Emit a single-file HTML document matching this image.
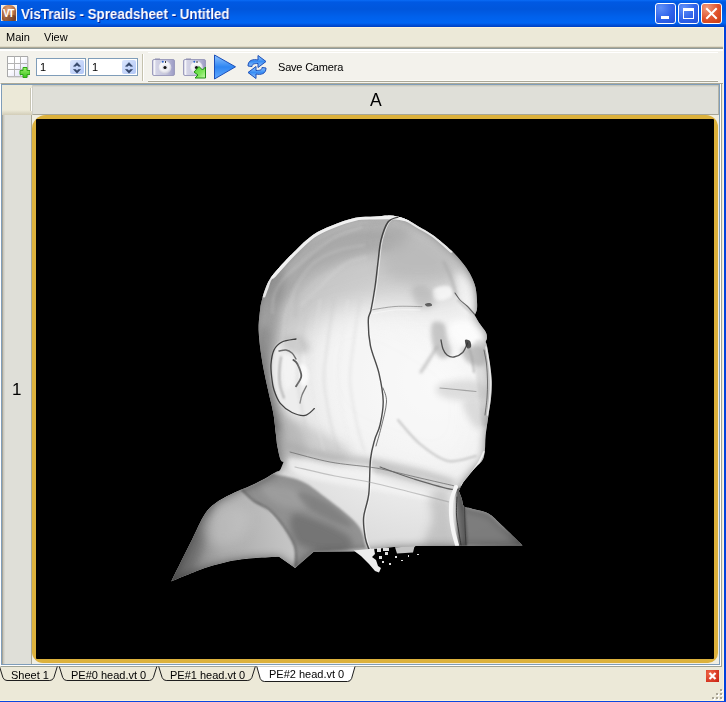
<!DOCTYPE html>
<html><head><meta charset="utf-8">
<style>
*{margin:0;padding:0;box-sizing:border-box}
html,body{width:726px;height:702px;overflow:hidden;background:#ece9d8;font-family:"Liberation Sans",sans-serif;}
.mi,.tab,#ttext,.spin span,.txt{will-change:transform}
.a{position:absolute}
#title{left:0;top:0;width:726px;height:27px;background:linear-gradient(#0a6cf7 0px,#0059e3 2px,#0056dc 9px,#0061ec 17px,#0065f3 23px,#0050d8 25px,#003fc0 27px)}
#ttext{left:21px;top:5.5px;color:#fff;font-weight:bold;font-size:14px;text-shadow:1px 1px 0 #0a1e8c;white-space:nowrap;transform:scaleX(0.955);transform-origin:0 0}
.tb{width:21px;height:21px;top:3px;border:1px solid #fff;border-radius:3px}
.mi{font-size:11px;top:31px;color:#000}
.spin{top:58px;width:50px;height:18px;border:1px solid #7f9db9;background:#fff}
.spin span{position:absolute;left:3px;top:2px;font-size:11px}
.spinb{position:absolute;left:33px;top:1px;width:14px;height:14px;border-radius:2px;background:linear-gradient(135deg,#dbe6fd,#b1c6f6)}
.hdr{background:#e0dfd8}
.tab{font-size:11px;top:669px;color:#000;white-space:nowrap}
</style></head><body>
<div id="title" class="a"></div>
<!-- app icon -->
<div class="a" style="left:1px;top:5px;width:16px;height:16px;background:#f2ede6"></div>
<div class="a" style="left:2px;top:5px;width:14px;height:16px;border-radius:6px 6px 2px 2px;background:radial-gradient(ellipse at 45% 30%,#e0a880 0,#c07a50 45%,#8e5030 80%,#6a3820 100%)"></div>
<div class="a" style="left:5px;top:15px;width:11px;height:6px;background:linear-gradient(90deg,#9a6040,#6a3a22);border-radius:3px 3px 0 0;opacity:.8"></div>
<div class="a" style="left:3px;top:9px;font-size:10px;font-weight:bold;color:#fff;letter-spacing:-1.5px;line-height:10px">VT</div>
<div id="ttext" class="a">VisTrails - Spreadsheet - Untitled</div>
<!-- title buttons -->
<div class="a tb" style="left:655px;background:radial-gradient(circle at 25% 20%,#5f8ff8,#2f63ea 55%,#2350d8)"></div>
<div class="a" style="left:661px;top:16px;width:8px;height:3px;background:#fff"></div>
<div class="a tb" style="left:678px;background:radial-gradient(circle at 25% 20%,#5f8ff8,#2f63ea 55%,#2350d8)"></div>
<div class="a" style="left:683px;top:8px;width:11px;height:11px;border:1px solid #fff;border-top-width:3px"></div>
<div class="a tb" style="left:701px;background:radial-gradient(circle at 25% 20%,#f09a7c,#e0512b 55%,#c83d12)"></div>
<svg class="a" style="left:701px;top:3px" width="21" height="21"><path d="M6 6L15 15M15 6L6 15" stroke="#fff" stroke-width="2" stroke-linecap="square"/></svg>

<!-- menu -->
<div class="a" style="left:0;top:27px;width:723px;height:1px;background:#fbf3dc"></div>
<div class="a" style="left:0;top:46px;width:723px;height:1px;background:#ddd9c6"></div>
<div class="a" style="left:0;top:47px;width:723px;height:1px;background:#aca895"></div>
<div class="a" style="left:0;top:48px;width:723px;height:1px;background:#909b9b"></div>
<div class="a mi" style="left:6px">Main</div>
<div class="a mi" style="left:44px">View</div>

<!-- toolbar -->
<div class="a" style="left:0;top:49px;width:723px;height:2px;background:#fff"></div>
<div class="a" style="left:0;top:51px;width:723px;height:31px;background:#f3f2ec"></div>
<div class="a" style="left:148px;top:52px;width:570px;height:1px;background:#fff"></div>
<div class="a" style="left:148px;top:80px;width:570px;height:1px;background:#fbfbf7"></div>
<div class="a" style="left:148px;top:81px;width:570px;height:1px;background:#a9a797"></div>
<div class="a" style="left:0;top:82px;width:723px;height:1px;background:#f6f5ee"></div>
<div class="a" style="left:0;top:83px;width:723px;height:1px;background:#aca997"></div>
<div class="a" style="left:142px;top:54px;width:1px;height:27px;background:#c5c2ae"></div>
<div class="a" style="left:143px;top:54px;width:1px;height:27px;background:#fff"></div>

<!-- grid icon -->
<svg class="a" style="left:6px;top:55px" width="24" height="24">
 <defs><linearGradient id="gg" x1="0" y1="0" x2="1" y2="1"><stop offset="0.4" stop-color="#fff"/><stop offset="1" stop-color="#d8d8f8"/></linearGradient>
 <linearGradient id="gp" x1="0" y1="0" x2="0" y2="1"><stop offset="0" stop-color="#9df46a"/><stop offset="1" stop-color="#3cc01e"/></linearGradient></defs>
 <rect x="1.5" y="1.5" width="20" height="20" fill="url(#gg)" stroke="#a9a9a9"/>
 <path d="M8.5 1.5V21.5M14.5 1.5V21.5M1.5 8.5H21.5M1.5 14.5H21.5" stroke="#b4b4b4"/>
 <path d="M22 2V22H2" stroke="#c8c8c8" fill="none"/>
 <path d="M15.5 14.5h3v-3h4v3h3v4h-3v3h-4v-3h-3z" transform="translate(-1.5,1)" fill="url(#gp)" stroke="#2ea615" stroke-width="1"/>
</svg>

<!-- spin boxes -->
<div class="a spin" style="left:36px"><span>1</span><div class="spinb"></div>
<svg style="position:absolute;left:36px;top:3px" width="8" height="12"><path d="M0.5 4.3L4 0.6L7.5 4.3L5.5 4.3L4 3.1L2.5 4.3z M0.5 7.5L4 11.2L7.5 7.5L5.5 7.5L4 8.7L2.5 7.5z" fill="#34466a" stroke="#34466a" stroke-width="0.6" stroke-linejoin="round"/></svg></div>
<div class="a spin" style="left:88px"><span>1</span><div class="spinb"></div>
<svg style="position:absolute;left:36px;top:3px" width="8" height="12"><path d="M0.5 4.3L4 0.6L7.5 4.3L5.5 4.3L4 3.1L2.5 4.3z M0.5 7.5L4 11.2L7.5 7.5L5.5 7.5L4 8.7L2.5 7.5z" fill="#34466a" stroke="#34466a" stroke-width="0.6" stroke-linejoin="round"/></svg></div>

<!-- camera icons -->
<svg class="a" style="left:151px;top:57px" width="26" height="20">
 <defs><linearGradient id="cb" x1="0" y1="0" x2="1" y2="0"><stop offset="0" stop-color="#b4b4d2"/><stop offset="0.08" stop-color="#fafafc"/><stop offset="0.16" stop-color="#d4d4e6"/><stop offset="0.6" stop-color="#c4c4dc"/><stop offset="1" stop-color="#9a9ac4"/></linearGradient>
 <radialGradient id="cl" cx="0.45" cy="0.4" r="0.6"><stop offset="0" stop-color="#fff"/><stop offset="0.6" stop-color="#f2f2f6"/><stop offset="1" stop-color="#c8c8d8"/></radialGradient></defs>
 <rect x="1.5" y="2.5" width="22" height="16" rx="1.5" fill="url(#cb)" stroke="#9d9dbd"/>
 <rect x="4" y="1.5" width="5" height="1.2" fill="#8d8db0"/>
 <circle cx="14" cy="10.5" r="6.4" fill="url(#cl)"/>
 <circle cx="14" cy="10.5" r="3" fill="#e6e6ee"/>
 <circle cx="14" cy="10.5" r="1.6" fill="#111"/>
 <circle cx="11.8" cy="4.8" r="1" fill="#2a62c8"/><rect x="14" y="4" width="1" height="2" fill="#333"/>
</svg>
<svg class="a" style="left:182px;top:57px" width="26" height="23">
 <defs><linearGradient id="ga" x1="0" y1="0" x2="1" y2="1"><stop offset="0" stop-color="#52d236"/><stop offset="0.6" stop-color="#7ee65a"/><stop offset="1" stop-color="#c8f8b0"/></linearGradient></defs>
 <rect x="1.5" y="2.5" width="22" height="16" rx="1.5" fill="url(#cb)" stroke="#9d9dbd"/>
 <rect x="4" y="1.5" width="5" height="1.2" fill="#8d8db0"/>
 <circle cx="14.5" cy="10.5" r="6.4" fill="url(#cl)"/>
 <circle cx="14.5" cy="10.5" r="3" fill="#e6e6ee"/>
 <circle cx="14.5" cy="10.5" r="1.6" fill="#111"/>
 <circle cx="12.3" cy="4.8" r="1" fill="#2a62c8"/><rect x="14.5" y="4" width="1" height="2" fill="#333"/>
 <path d="M12 15L17 9.5L20.5 13L23.5 10V21H13L16 18Z" fill="url(#ga)" stroke="#1f8f12" stroke-linejoin="round"/>
</svg>
<!-- play -->
<svg class="a" style="left:212px;top:53px" width="26" height="28">
 <defs><linearGradient id="pl" x1="0" y1="0" x2="0" y2="1"><stop offset="0" stop-color="#8fc4ff"/><stop offset="0.5" stop-color="#2f86f2"/><stop offset="1" stop-color="#62aaff"/></linearGradient></defs>
 <path d="M2.5 2L23.5 13.8L2.5 26z" fill="url(#pl)" stroke="#1c4fb8" stroke-linejoin="round"/>
</svg>
<!-- refresh -->
<svg class="a" style="left:245px;top:53px" width="24" height="28">
 <defs><linearGradient id="rf" x1="0" y1="0" x2="0" y2="1"><stop offset="0" stop-color="#9ccaff"/><stop offset="0.5" stop-color="#3a8ef4"/><stop offset="1" stop-color="#9ccaff"/></linearGradient></defs>
 <path d="M3 13C3 7 8 6 13 7V2.5L21 8.5L13 14.5V10.5C9 10.5 7 11 7 13.5z" fill="url(#rf)" stroke="#1c4fb8" stroke-linejoin="round"/>
 <path d="M21 15C21 21 16 22 11 21V25.5L3 19.5L11 13.5V17.5C15 17.5 17 17 17 14.5z" fill="url(#rf)" stroke="#1c4fb8" stroke-linejoin="round"/>
</svg>
<div class="a txt" style="left:278px;top:61px;font-size:11px;white-space:nowrap;letter-spacing:-0.2px">Save Camera</div>

<!-- spreadsheet frame -->
<div class="a" style="left:0px;top:83px;width:722px;height:584px;border-top:1px solid #aca997;border-left:1px solid #fff;border-right:1px solid #a0a496;border-bottom:1px solid #a0a496"></div>
<div class="a" style="left:1px;top:84px;width:720px;height:582px;border-right:1px solid #fff;border-bottom:1px solid #fff"></div>
<div class="a" style="left:1px;top:84px;width:719px;height:581px;border:1px solid #7f9db9;background:#ece9d8"></div>
<div class="a" style="left:2px;top:85px;width:30px;height:30px;background:linear-gradient(#ece9d8 0,#ece9d8 25px,#dcd8c4 28px,#d2cdb8 30px)"></div>
<div class="a" style="left:30px;top:88px;width:1px;height:23px;background:#c6c3b2"></div>
<div class="a" style="left:31px;top:88px;width:1px;height:23px;background:#fff"></div>
<div class="a hdr" style="left:32px;top:85px;width:687px;height:30px;border-bottom:1px solid #a7a697;border-left:1px solid #cfcfc7;border-right:1px solid #b5b4a6;background:linear-gradient(#c8c8bc 0,#c8c8bc 1px,#d6d6ce 1px,#d6d6ce 2px,#dfdfd8 2px)"></div>
<div class="a txt" style="left:370px;top:90px;font-size:17.5px">A</div>
<div class="a hdr" style="left:2px;top:115px;width:30px;height:549px;border-right:1px solid #a7a697;background:linear-gradient(90deg,#a9a597 0,#a9a597 1px,#c9c9c1 1px,#c9c9c1 2px,#d5d5cd 2px,#d5d5cd 3px,#dfdfd8 3px)"></div>
<div class="a txt" style="left:12px;top:380px;font-size:17px">1</div>
<!-- cell -->
<div class="a" style="left:32px;top:115px;width:687px;height:549px;background:#f0eee2"></div>
<div class="a" style="left:32px;top:115px;width:686px;height:548px;background:#dcb13c;border-radius:14px 12px 10px 11px"></div>
<div class="a" style="left:36px;top:119px;width:678px;height:540px;background:#000;border-radius:1px;overflow:hidden">
<!--HEAD--><svg width="678" height="540" viewBox="36 119 678 540" style="position:absolute;left:0;top:0">
<defs>
 <radialGradient id="hg" gradientUnits="userSpaceOnUse" cx="420" cy="380" r="240" fx="440" fy="380">
  <stop offset="0" stop-color="#f8f8f8"/><stop offset="0.4" stop-color="#efefef"/><stop offset="0.72" stop-color="#dcdcdc"/><stop offset="1" stop-color="#b2b2b2"/>
 </radialGradient>
 <linearGradient id="fg" gradientUnits="userSpaceOnUse" x1="175" y1="540" x2="300" y2="520">
  <stop offset="0" stop-color="#7c7c7c"/><stop offset="0.35" stop-color="#a8a8a8"/><stop offset="0.8" stop-color="#c0c0c0"/><stop offset="1" stop-color="#cacaca"/>
 </linearGradient>
 <clipPath id="cp"><path d="M260.5 306.0 C261.2 303.5 262.5 296.1 264.5 291.0 C266.5 285.9 267.5 282.0 272.4 275.6 C277.2 269.2 286.9 259.2 293.6 252.4 C300.3 245.6 306.4 239.5 312.8 235.0 C319.2 230.5 324.9 228.3 332.0 225.4 C339.1 222.5 348.1 219.2 355.3 217.7 C362.5 216.2 369.2 216.9 375.0 216.5 C380.8 216.1 385.1 215.2 390.0 215.5 C394.9 215.8 399.4 216.7 404.2 218.5 C408.9 220.3 413.8 223.7 418.5 226.4 C423.2 229.2 427.2 231.0 432.7 235.0 C438.2 239.0 446.1 245.6 451.3 250.6 C456.5 255.6 460.7 260.5 464.0 264.8 C467.3 269.1 469.3 272.4 471.2 276.2 C473.1 280.0 474.5 283.3 475.5 287.6 C476.5 291.9 476.8 298.2 477.0 301.9 C477.2 305.6 477.2 307.8 476.8 310.0 C476.4 312.2 475.1 314.3 474.7 315.2 C475.6 316.6 477.9 320.9 479.8 323.8 C481.7 326.7 484.6 329.9 485.8 332.3 C487.0 334.7 486.9 336.4 486.9 338.0 C486.8 339.6 485.7 341.3 485.5 342.0 C485.8 342.7 486.2 342.3 487.0 346.0 C487.8 349.7 489.2 358.1 490.0 364.0 C490.8 369.9 491.6 375.6 491.8 381.3 C492.0 387.0 491.6 392.7 491.0 398.4 C490.4 404.1 489.3 409.3 488.4 415.5 C487.5 421.7 486.2 429.9 485.6 435.6 C485.0 441.4 485.4 446.0 484.9 450.0 C484.4 454.0 484.2 457.0 482.7 459.8 C481.2 462.6 478.4 464.4 476.0 467.0 C473.6 469.6 470.7 473.0 468.5 475.7 C466.3 478.4 464.4 480.5 462.8 483.1 C461.2 485.7 459.5 489.8 458.8 491.1 C459.3 492.3 460.8 495.9 461.7 498.5 C462.6 501.1 462.4 504.9 464.0 506.5 C465.6 508.1 467.2 507.2 471.3 508.4 C475.4 509.6 483.3 510.6 488.4 513.5 C493.5 516.4 496.3 520.2 502.0 525.5 C507.7 530.8 519.2 542.2 522.6 545.5 L415.3 545.9 L415.0 547.0 L394.0 547.0 L353.0 551.6 L313.7 551.7 L295.1 567.9 L279.0 556.7 C272.8 557.1 253.4 557.6 241.8 559.2 C230.2 560.9 221.4 562.9 209.6 566.6 C197.8 570.3 177.6 579.0 171.2 581.5 C172.6 578.6 176.3 571.0 179.8 564.0 C183.3 557.0 188.1 547.5 192.2 539.3 C196.3 531.0 200.5 520.7 204.6 514.5 C208.7 508.3 211.6 505.8 217.0 502.0 C222.4 498.2 231.2 494.2 236.8 491.5 C242.4 488.8 245.9 487.9 250.5 485.8 C255.1 483.7 260.0 481.3 264.2 479.0 C268.4 476.7 273.0 473.7 275.6 472.2 C278.2 470.7 278.8 471.6 280.1 469.9 C281.4 468.2 283.0 463.2 283.6 461.9 C283.1 461.5 281.6 462.3 280.6 459.8 C279.6 457.3 278.3 451.1 277.5 447.0 C276.7 442.9 276.7 440.7 276.0 435.0 C275.3 429.3 274.6 420.2 273.3 413.0 C272.1 405.8 270.4 400.8 268.5 392.0 C266.6 383.2 263.6 370.3 262.0 360.0 C260.4 349.7 258.9 339.0 258.6 330.0 C258.4 321.0 260.2 310.0 260.5 306.0 Z"/></clipPath>
 <filter id="inner" x="-10%" y="-10%" width="120%" height="120%">
  <feFlood flood-color="#000"/><feComposite in2="SourceAlpha" operator="out"/><feGaussianBlur stdDeviation="5"/><feComposite in2="SourceAlpha" operator="in"/>
 </filter>
 <filter id="b06" x="-50%" y="-50%" width="200%" height="200%"><feGaussianBlur stdDeviation="0.6"/></filter><filter id="b08" x="-50%" y="-50%" width="200%" height="200%"><feGaussianBlur stdDeviation="0.8"/></filter><filter id="b1" x="-50%" y="-50%" width="200%" height="200%"><feGaussianBlur stdDeviation="1"/></filter><filter id="b15" x="-50%" y="-50%" width="200%" height="200%"><feGaussianBlur stdDeviation="1.5"/></filter><filter id="b2" x="-50%" y="-50%" width="200%" height="200%"><feGaussianBlur stdDeviation="2"/></filter><filter id="b25" x="-50%" y="-50%" width="200%" height="200%"><feGaussianBlur stdDeviation="2.5"/></filter><filter id="b3" x="-50%" y="-50%" width="200%" height="200%"><feGaussianBlur stdDeviation="3"/></filter><filter id="b4" x="-50%" y="-50%" width="200%" height="200%"><feGaussianBlur stdDeviation="4"/></filter><filter id="b5" x="-50%" y="-50%" width="200%" height="200%"><feGaussianBlur stdDeviation="5"/></filter><filter id="b6" x="-50%" y="-50%" width="200%" height="200%"><feGaussianBlur stdDeviation="6"/></filter><filter id="b7" x="-50%" y="-50%" width="200%" height="200%"><feGaussianBlur stdDeviation="7"/></filter><filter id="b8" x="-50%" y="-50%" width="200%" height="200%"><feGaussianBlur stdDeviation="8"/></filter><filter id="b10" x="-50%" y="-50%" width="200%" height="200%"><feGaussianBlur stdDeviation="10"/></filter><filter id="b12" x="-50%" y="-50%" width="200%" height="200%"><feGaussianBlur stdDeviation="12"/></filter><filter id="b14" x="-50%" y="-50%" width="200%" height="200%"><feGaussianBlur stdDeviation="14"/></filter><filter id="b16" x="-50%" y="-50%" width="200%" height="200%"><feGaussianBlur stdDeviation="16"/></filter>
</defs>
<path d="M260.5 306.0 C261.2 303.5 262.5 296.1 264.5 291.0 C266.5 285.9 267.5 282.0 272.4 275.6 C277.2 269.2 286.9 259.2 293.6 252.4 C300.3 245.6 306.4 239.5 312.8 235.0 C319.2 230.5 324.9 228.3 332.0 225.4 C339.1 222.5 348.1 219.2 355.3 217.7 C362.5 216.2 369.2 216.9 375.0 216.5 C380.8 216.1 385.1 215.2 390.0 215.5 C394.9 215.8 399.4 216.7 404.2 218.5 C408.9 220.3 413.8 223.7 418.5 226.4 C423.2 229.2 427.2 231.0 432.7 235.0 C438.2 239.0 446.1 245.6 451.3 250.6 C456.5 255.6 460.7 260.5 464.0 264.8 C467.3 269.1 469.3 272.4 471.2 276.2 C473.1 280.0 474.5 283.3 475.5 287.6 C476.5 291.9 476.8 298.2 477.0 301.9 C477.2 305.6 477.2 307.8 476.8 310.0 C476.4 312.2 475.1 314.3 474.7 315.2 C475.6 316.6 477.9 320.9 479.8 323.8 C481.7 326.7 484.6 329.9 485.8 332.3 C487.0 334.7 486.9 336.4 486.9 338.0 C486.8 339.6 485.7 341.3 485.5 342.0 C485.8 342.7 486.2 342.3 487.0 346.0 C487.8 349.7 489.2 358.1 490.0 364.0 C490.8 369.9 491.6 375.6 491.8 381.3 C492.0 387.0 491.6 392.7 491.0 398.4 C490.4 404.1 489.3 409.3 488.4 415.5 C487.5 421.7 486.2 429.9 485.6 435.6 C485.0 441.4 485.4 446.0 484.9 450.0 C484.4 454.0 484.2 457.0 482.7 459.8 C481.2 462.6 478.4 464.4 476.0 467.0 C473.6 469.6 470.7 473.0 468.5 475.7 C466.3 478.4 464.4 480.5 462.8 483.1 C461.2 485.7 459.5 489.8 458.8 491.1 C459.3 492.3 460.8 495.9 461.7 498.5 C462.6 501.1 462.4 504.9 464.0 506.5 C465.6 508.1 467.2 507.2 471.3 508.4 C475.4 509.6 483.3 510.6 488.4 513.5 C493.5 516.4 496.3 520.2 502.0 525.5 C507.7 530.8 519.2 542.2 522.6 545.5 L415.3 545.9 L415.0 547.0 L394.0 547.0 L353.0 551.6 L313.7 551.7 L295.1 567.9 L279.0 556.7 C272.8 557.1 253.4 557.6 241.8 559.2 C230.2 560.9 221.4 562.9 209.6 566.6 C197.8 570.3 177.6 579.0 171.2 581.5 C172.6 578.6 176.3 571.0 179.8 564.0 C183.3 557.0 188.1 547.5 192.2 539.3 C196.3 531.0 200.5 520.7 204.6 514.5 C208.7 508.3 211.6 505.8 217.0 502.0 C222.4 498.2 231.2 494.2 236.8 491.5 C242.4 488.8 245.9 487.9 250.5 485.8 C255.1 483.7 260.0 481.3 264.2 479.0 C268.4 476.7 273.0 473.7 275.6 472.2 C278.2 470.7 278.8 471.6 280.1 469.9 C281.4 468.2 283.0 463.2 283.6 461.9 C283.1 461.5 281.6 462.3 280.6 459.8 C279.6 457.3 278.3 451.1 277.5 447.0 C276.7 442.9 276.7 440.7 276.0 435.0 C275.3 429.3 274.6 420.2 273.3 413.0 C272.1 405.8 270.4 400.8 268.5 392.0 C266.6 383.2 263.6 370.3 262.0 360.0 C260.4 349.7 258.9 339.0 258.6 330.0 C258.4 321.0 260.2 310.0 260.5 306.0 Z" fill="url(#hg)"/>
<g clip-path="url(#cp)">
<path d="M171.2 581.5 C172.6 578.6 176.3 571.0 179.8 564.0 C183.3 557.0 188.1 547.5 192.2 539.3 C196.3 531.0 200.5 520.7 204.6 514.5 C208.7 508.3 211.6 505.8 217.0 502.0 C222.4 498.2 231.1 493.5 236.8 491.5 C242.5 489.5 248.6 490.2 251.0 490.0 C252.8 492.5 257.2 499.0 262.0 505.0 C266.8 511.0 274.7 519.0 280.0 526.0 C285.3 533.0 291.2 540.3 294.0 547.0 C296.8 553.7 296.5 562.8 297.0 566.0 L295.1 567.9 L279.0 556.7 C272.8 557.1 253.4 557.6 241.8 559.2 C230.2 560.9 221.4 562.9 209.6 566.6 C197.8 570.3 177.6 579.0 171.2 581.5 Z" fill="url(#fg)"/>
<path d="M262.0 300.0 C264.5 283.3 277.0 263.0 290.0 250.0 C303.0 237.0 321.7 228.0 340.0 222.0 C358.3 216.0 381.7 211.0 400.0 214.0 C418.3 217.0 438.3 229.0 450.0 240.0 C461.7 251.0 471.7 270.0 470.0 280.0 C468.3 290.0 455.0 296.7 440.0 300.0 C425.0 303.3 400.0 296.7 380.0 300.0 C360.0 303.3 337.5 311.7 320.0 320.0 C302.5 328.3 284.7 353.3 275.0 350.0 C265.3 346.7 259.5 316.7 262.0 300.0Z" fill="#a4a4a4" opacity="0.45" filter="url(#b14)"/>
<path d="M272.0 282.0 C275.0 273.2 287.5 260.7 298.0 252.0 C308.5 243.3 321.3 235.0 335.0 230.0 C348.7 225.0 367.5 222.0 380.0 222.0 C392.5 222.0 407.5 225.7 410.0 230.0 C412.5 234.3 405.0 243.3 395.0 248.0 C385.0 252.7 364.2 253.3 350.0 258.0 C335.8 262.7 321.7 268.2 310.0 276.0 C298.3 283.8 286.3 304.0 280.0 305.0 C273.7 306.0 269.0 290.8 272.0 282.0Z" fill="#8e8e8e" opacity="0.5" filter="url(#b6)"/>
<path d="M262.0 300.0 C264.0 286.3 268.3 283.0 272.0 278.0 C275.7 273.0 282.3 266.3 284.0 270.0 C285.7 273.7 283.0 288.3 282.0 300.0 C281.0 311.7 278.3 325.0 278.0 340.0 C277.7 355.0 278.7 373.3 280.0 390.0 C281.3 406.7 286.0 428.7 286.0 440.0 C286.0 451.3 283.0 463.0 280.0 458.0 C277.0 453.0 271.3 426.3 268.0 410.0 C264.7 393.7 261.0 378.3 260.0 360.0 C259.0 341.7 260.0 313.7 262.0 300.0Z" fill="#7c7c7c" opacity="0.55" filter="url(#b4)"/>
<path d="M385.0 228.0 C390.8 221.3 408.8 228.0 420.0 232.0 C431.2 236.0 446.2 244.8 452.0 252.0 C457.8 259.2 460.3 270.0 455.0 275.0 C449.7 280.0 431.7 282.5 420.0 282.0 C408.3 281.5 390.8 281.0 385.0 272.0 C379.2 263.0 379.2 234.7 385.0 228.0Z" fill="#b0b0b0" opacity="0.55" filter="url(#b7)"/>
<path d="M320.0 320.0 C330.0 308.3 353.3 308.3 370.0 310.0 C386.7 311.7 403.3 320.0 420.0 330.0 C436.7 340.0 460.8 351.7 470.0 370.0 C479.2 388.3 480.0 423.3 475.0 440.0 C470.0 456.7 455.8 467.5 440.0 470.0 C424.2 472.5 398.3 461.7 380.0 455.0 C361.7 448.3 341.7 442.5 330.0 430.0 C318.3 417.5 311.7 398.3 310.0 380.0 C308.3 361.7 310.0 331.7 320.0 320.0Z" fill="#fcfcfc" opacity="0.4" filter="url(#b12)"/>
<path d="M456.0 274.0 C457.3 270.3 466.5 277.7 470.0 282.0 C473.5 286.3 476.3 295.0 477.0 300.0 C477.7 305.0 476.5 311.3 474.0 312.0 C471.5 312.7 465.0 310.3 462.0 304.0 C459.0 297.7 454.7 277.7 456.0 274.0Z" fill="#fafafa" opacity="0.55" filter="url(#b3)"/>
<path d="M434.0 289.0 C436.3 286.8 444.8 285.2 448.0 286.0 C451.2 286.8 453.7 291.7 453.0 294.0 C452.3 296.3 447.2 299.2 444.0 300.0 C440.8 300.8 435.7 300.8 434.0 299.0 C432.3 297.2 431.7 291.2 434.0 289.0Z" fill="#fcfcfc" opacity="0.75" filter="url(#b15)"/>
<path d="M412.0 288.0 C413.3 284.7 422.3 284.7 426.0 286.0 C429.7 287.3 433.0 292.7 434.0 296.0 C435.0 299.3 434.7 304.3 432.0 306.0 C429.3 307.7 421.3 309.0 418.0 306.0 C414.7 303.0 410.7 291.3 412.0 288.0Z" fill="#a8a8a8" opacity="0.5" filter="url(#b3)"/>
<path d="M425.0 304.0 C425.5 303.4 428.8 302.8 430.0 303.0 C431.2 303.2 432.5 304.9 432.0 305.5 C431.5 306.1 428.2 306.8 427.0 306.5 C425.8 306.2 424.5 304.6 425.0 304.0Z" fill="#333" opacity="0.7" filter="url(#b06)"/>
<path d="M432.0 324.0 C433.8 320.3 441.3 321.3 444.0 324.0 C446.7 326.7 446.8 335.0 448.0 340.0 C449.2 345.0 452.2 351.0 451.0 354.0 C449.8 357.0 444.0 359.3 441.0 358.0 C438.0 356.7 434.5 351.7 433.0 346.0 C431.5 340.3 430.2 327.7 432.0 324.0Z" fill="#989898" opacity="0.5" filter="url(#b2)"/>
<path d="M452.0 322.0 C456.0 319.7 468.3 320.0 474.0 322.0 C479.7 324.0 485.0 330.0 486.0 334.0 C487.0 338.0 484.0 344.0 480.0 346.0 C476.0 348.0 467.0 347.7 462.0 346.0 C457.0 344.3 451.7 340.0 450.0 336.0 C448.3 332.0 448.0 324.3 452.0 322.0Z" fill="#fdfdfd" opacity="0.85" filter="url(#b3)"/>
<path d="M462.0 349.0 C464.0 346.3 476.0 344.8 480.0 346.0 C484.0 347.2 485.7 352.7 486.0 356.0 C486.3 359.3 485.0 365.0 482.0 366.0 C479.0 367.0 471.3 364.8 468.0 362.0 C464.7 359.2 460.0 351.7 462.0 349.0Z" fill="#9a9a9a" opacity="0.55" filter="url(#b2)"/>
<path d="M440.0 384.0 C445.3 381.7 462.0 379.3 470.0 380.0 C478.0 380.7 485.7 384.7 488.0 388.0 C490.3 391.3 489.3 398.0 484.0 400.0 C478.7 402.0 463.7 401.0 456.0 400.0 C448.3 399.0 440.7 396.7 438.0 394.0 C435.3 391.3 434.7 386.3 440.0 384.0Z" fill="#bdbdbd" opacity="0.45" filter="url(#b3)"/>
<path d="M270.0 412.0 C272.7 408.3 284.2 413.3 290.0 418.0 C295.8 422.7 303.3 432.7 305.0 440.0 C306.7 447.3 303.8 458.3 300.0 462.0 C296.2 465.7 286.3 465.7 282.0 462.0 C277.7 458.3 276.0 448.3 274.0 440.0 C272.0 431.7 267.3 415.7 270.0 412.0Z" fill="#a0a0a0" opacity="0.5" filter="url(#b4)"/>
<path d="M288.0 420.0 C294.0 418.7 309.7 426.7 320.0 432.0 C330.3 437.3 347.3 446.8 350.0 452.0 C352.7 457.2 344.3 462.0 336.0 463.0 C327.7 464.0 308.7 461.8 300.0 458.0 C291.3 454.2 286.0 446.3 284.0 440.0 C282.0 433.7 282.0 421.3 288.0 420.0Z" fill="#b0b0b0" opacity="0.45" filter="url(#b5)"/>
<path d="M378.0 466.0 C383.7 465.7 398.0 470.3 410.0 474.0 C422.0 477.7 441.3 485.8 450.0 488.0 C458.7 490.2 461.7 485.7 462.0 487.0 C462.3 488.3 460.7 495.8 452.0 496.0 C443.3 496.2 422.7 491.3 410.0 488.0 C397.3 484.7 381.3 479.7 376.0 476.0 C370.7 472.3 372.3 466.3 378.0 466.0Z" fill="#a8a8a8" opacity="0.5" filter="url(#b2)"/>
<path d="M290.0 458.0 C296.7 456.7 325.0 465.3 340.0 468.0 C355.0 470.7 366.7 471.3 380.0 474.0 C393.3 476.7 407.5 481.2 420.0 484.0 C432.5 486.8 449.7 487.7 455.0 491.0 C460.3 494.3 459.5 503.0 452.0 504.0 C444.5 505.0 425.3 499.7 410.0 497.0 C394.7 494.3 378.3 491.5 360.0 488.0 C341.7 484.5 311.7 481.0 300.0 476.0 C288.3 471.0 283.3 459.3 290.0 458.0Z" fill="#f4f4f4" opacity="0.7" filter="url(#b2)"/>
<path d="M241.8 489.8 C243.2 489.1 246.8 487.6 250.5 485.8 C254.2 484.0 260.6 481.1 264.2 479.0 C267.8 476.9 270.7 474.4 272.0 473.5 C276.8 474.8 292.2 477.1 301.0 481.0 C309.8 484.9 315.4 489.7 324.9 497.0 C334.4 504.3 350.9 516.5 357.8 525.0 C364.7 533.5 364.6 544.2 366.0 548.0 L313.7 552.0 L295.1 567.9 C295.1 564.4 296.9 553.6 295.0 546.8 C293.1 540.0 288.3 533.2 284.0 527.0 C279.7 520.8 274.0 513.9 269.0 509.6 C264.0 505.3 258.5 504.3 254.0 501.0 C249.5 497.7 243.8 491.7 241.8 489.8 Z" fill="#8a8a8a" opacity="0.9" filter="url(#b1)"/>
<path d="M292.0 515.0 C295.7 511.2 312.3 518.2 322.0 522.0 C331.7 525.8 346.2 533.3 350.0 538.0 C353.8 542.7 353.3 548.8 345.0 550.0 C336.7 551.2 308.8 550.8 300.0 545.0 C291.2 539.2 288.3 518.8 292.0 515.0Z" fill="#5e5e5e" opacity="0.55" filter="url(#b3)"/>
<path d="M262.0 486.0 C265.7 484.0 284.0 484.8 292.0 488.0 C300.0 491.2 310.3 501.7 310.0 505.0 C309.7 508.3 296.7 508.8 290.0 508.0 C283.3 507.2 274.7 503.7 270.0 500.0 C265.3 496.3 258.3 488.0 262.0 486.0Z" fill="#a8a8a8" opacity="0.5" filter="url(#b3)"/>
<path d="M300.0 492.0 C304.2 492.0 321.3 499.3 330.0 505.0 C338.7 510.7 352.0 523.5 352.0 526.0 C352.0 528.5 337.8 523.5 330.0 520.0 C322.2 516.5 310.0 509.7 305.0 505.0 C300.0 500.3 295.8 492.0 300.0 492.0Z" fill="#6e6e6e" opacity="0.45" filter="url(#b2)"/>
<path d="M459.3 491.3 C459.8 493.4 460.0 501.1 462.0 504.0 C464.0 506.9 466.9 506.8 471.3 508.4 C475.7 510.0 483.3 510.6 488.4 513.5 C493.5 516.4 496.3 520.2 502.0 525.5 C507.7 530.8 529.3 542.1 522.6 545.5 C515.9 548.9 472.1 545.9 462.0 546.0 Z" fill="#6c6c6c" opacity="0.85" filter="url(#b2)"/>
<path d="M456.0 492.0 C456.3 482.7 458.8 488.7 460.0 490.0 C461.2 491.3 462.0 495.0 463.0 500.0 C464.0 505.0 465.3 512.5 466.0 520.0 C466.7 527.5 468.3 540.7 467.0 545.0 C465.7 549.3 459.8 554.8 458.0 546.0 C456.2 537.2 455.7 501.3 456.0 492.0Z" fill="#505050" opacity="0.75" filter="url(#b1)"/>
<path d="M172.0 580.0 C171.3 575.5 180.7 559.0 186.0 548.0 C191.3 537.0 199.3 521.0 204.0 514.0 C208.7 507.0 214.0 500.8 214.0 506.0 C214.0 511.2 208.0 533.5 204.0 545.0 C200.0 556.5 195.3 569.2 190.0 575.0 C184.7 580.8 172.7 584.5 172.0 580.0Z" fill="#5a5a5a" opacity="0.55" filter="url(#b4)"/>
<path d="M200.0 520.0 C202.5 513.3 221.7 505.8 230.0 505.0 C238.3 504.2 248.3 509.2 250.0 515.0 C251.7 520.8 245.8 535.0 240.0 540.0 C234.2 545.0 221.7 548.3 215.0 545.0 C208.3 541.7 197.5 526.7 200.0 520.0Z" fill="#d0d0d0" opacity="0.4" filter="url(#b6)"/>
<path d="M294.8 339.2 C291.3 339.4 282.7 340.2 279.0 343.0 C275.3 345.8 273.8 351.0 272.5 356.0 C271.2 361.0 271.0 367.5 271.2 373.0 C271.4 378.5 272.3 383.9 273.8 389.0 C275.3 394.1 277.3 399.5 280.3 403.4 C283.3 407.3 287.9 410.6 292.0 412.5 C296.1 414.4 301.3 415.6 305.0 415.0 C308.7 414.4 313.2 411.9 314.4 408.6 C315.6 405.3 313.1 400.6 312.0 395.0 C310.9 389.4 309.2 381.7 308.0 375.0 C306.8 368.3 306.3 360.5 305.0 355.0 C303.7 349.5 301.7 344.6 300.0 342.0 C298.3 339.4 298.3 339.0 294.8 339.2Z" fill="#eeeeee" opacity="0.95" filter="url(#b1)"/>
<path d="M282.0 338.0 C284.5 335.7 295.3 334.3 300.0 336.0 C304.7 337.7 310.0 345.0 310.0 348.0 C310.0 351.0 304.2 353.7 300.0 354.0 C295.8 354.3 288.0 352.7 285.0 350.0 C282.0 347.3 279.5 340.3 282.0 338.0Z" fill="#a8a8a8" opacity="0.45" filter="url(#b3)"/>
<path d="M299.0 365.0 C300.2 362.7 304.3 363.8 306.0 366.0 C307.7 368.2 309.3 374.7 309.0 378.0 C308.7 381.3 305.7 385.7 304.0 386.0 C302.3 386.3 299.8 383.5 299.0 380.0 C298.2 376.5 297.8 367.3 299.0 365.0Z" fill="#fbfbfb" opacity="0.9" filter="url(#b15)"/>
<path d="M283.0 355.0 C284.7 352.3 289.8 354.2 292.0 356.0 C294.2 357.8 295.7 361.7 296.0 366.0 C296.3 370.3 295.7 378.0 294.0 382.0 C292.3 386.0 288.0 391.7 286.0 390.0 C284.0 388.3 282.5 377.8 282.0 372.0 C281.5 366.2 281.3 357.7 283.0 355.0Z" fill="#f4f4f4" opacity="0.8" filter="url(#b2)"/>
<path d="M262.0 330.0 C263.3 322.5 269.0 326.7 270.0 335.0 C271.0 343.3 267.3 367.5 268.0 380.0 C268.7 392.5 271.7 401.7 274.0 410.0 C276.3 418.3 283.0 427.5 282.0 430.0 C281.0 432.5 271.3 433.3 268.0 425.0 C264.7 416.7 263.0 395.8 262.0 380.0 C261.0 364.2 260.7 337.5 262.0 330.0Z" fill="#7a7a7a" opacity="0.45" filter="url(#b3)"/>
<path d="M465.0 340.0 C465.5 338.8 469.0 339.8 470.0 341.0 C471.0 342.2 471.5 345.8 471.0 347.0 C470.5 348.2 468.0 349.2 467.0 348.0 C466.0 346.8 464.5 341.2 465.0 340.0Z" fill="#222" opacity="0.8" filter="url(#b06)"/>
<path d="M474.0 344.0 C475.3 336.7 483.3 340.0 486.0 346.0 C488.7 352.0 489.5 367.7 490.0 380.0 C490.5 392.3 490.3 412.7 489.0 420.0 C487.7 427.3 483.8 429.0 482.0 424.0 C480.2 419.0 479.3 403.3 478.0 390.0 C476.7 376.7 472.7 351.3 474.0 344.0Z" fill="#b0b0b0" opacity="0.35" filter="url(#b15)"/>
<path d="M463.0 404.0 C463.7 399.7 476.2 399.3 480.0 402.0 C483.8 404.7 486.7 415.7 486.0 420.0 C485.3 424.3 479.8 430.7 476.0 428.0 C472.2 425.3 462.3 408.3 463.0 404.0Z" fill="#b4b4b4" opacity="0.4" filter="url(#b3)"/>
<path d="M430.0 495.0 C432.7 490.3 444.3 487.8 448.0 492.0 C451.7 496.2 450.8 511.0 452.0 520.0 C453.2 529.0 459.5 541.7 455.0 546.0 C450.5 550.3 428.8 550.3 425.0 546.0 C421.2 541.7 431.2 528.5 432.0 520.0 C432.8 511.5 427.3 499.7 430.0 495.0Z" fill="#a0a0a0" opacity="0.45" filter="url(#b4)"/>
<path d="M260.5 306.0 C261.2 303.5 262.5 296.1 264.5 291.0 C266.5 285.9 267.5 282.0 272.4 275.6 C277.2 269.2 286.9 259.2 293.6 252.4 C300.3 245.6 306.4 239.5 312.8 235.0 C319.2 230.5 324.9 228.3 332.0 225.4 C339.1 222.5 348.1 219.2 355.3 217.7 C362.5 216.2 369.2 216.9 375.0 216.5 C380.8 216.1 385.1 215.2 390.0 215.5 C394.9 215.8 399.4 216.7 404.2 218.5 C408.9 220.3 413.8 223.7 418.5 226.4 C423.2 229.2 427.2 231.0 432.7 235.0 C438.2 239.0 446.1 245.6 451.3 250.6 C456.5 255.6 460.7 260.5 464.0 264.8 C467.3 269.1 469.3 272.4 471.2 276.2 C473.1 280.0 474.5 283.3 475.5 287.6 C476.5 291.9 476.8 298.2 477.0 301.9 C477.2 305.6 477.2 307.8 476.8 310.0 C476.4 312.2 475.1 314.3 474.7 315.2 C475.6 316.6 477.9 320.9 479.8 323.8 C481.7 326.7 484.6 329.9 485.8 332.3 C487.0 334.7 486.9 336.4 486.9 338.0 C486.8 339.6 485.7 341.3 485.5 342.0 C485.8 342.7 486.2 342.3 487.0 346.0 C487.8 349.7 489.2 358.1 490.0 364.0 C490.8 369.9 491.6 375.6 491.8 381.3 C492.0 387.0 491.6 392.7 491.0 398.4 C490.4 404.1 489.3 409.3 488.4 415.5 C487.5 421.7 486.2 429.9 485.6 435.6 C485.0 441.4 485.4 446.0 484.9 450.0 C484.4 454.0 484.2 457.0 482.7 459.8 C481.2 462.6 478.4 464.4 476.0 467.0 C473.6 469.6 470.7 473.0 468.5 475.7 C466.3 478.4 464.4 480.5 462.8 483.1 C461.2 485.7 459.5 489.8 458.8 491.1 C459.3 492.3 460.8 495.9 461.7 498.5 C462.6 501.1 462.4 504.9 464.0 506.5 C465.6 508.1 467.2 507.2 471.3 508.4 C475.4 509.6 483.3 510.6 488.4 513.5 C493.5 516.4 496.3 520.2 502.0 525.5 C507.7 530.8 519.2 542.2 522.6 545.5 L415.3 545.9 L415.0 547.0 L394.0 547.0 L353.0 551.6 L313.7 551.7 L295.1 567.9 L279.0 556.7 C272.8 557.1 253.4 557.6 241.8 559.2 C230.2 560.9 221.4 562.9 209.6 566.6 C197.8 570.3 177.6 579.0 171.2 581.5 C172.6 578.6 176.3 571.0 179.8 564.0 C183.3 557.0 188.1 547.5 192.2 539.3 C196.3 531.0 200.5 520.7 204.6 514.5 C208.7 508.3 211.6 505.8 217.0 502.0 C222.4 498.2 231.2 494.2 236.8 491.5 C242.4 488.8 245.9 487.9 250.5 485.8 C255.1 483.7 260.0 481.3 264.2 479.0 C268.4 476.7 273.0 473.7 275.6 472.2 C278.2 470.7 278.8 471.6 280.1 469.9 C281.4 468.2 283.0 463.2 283.6 461.9 C283.1 461.5 281.6 462.3 280.6 459.8 C279.6 457.3 278.3 451.1 277.5 447.0 C276.7 442.9 276.7 440.7 276.0 435.0 C275.3 429.3 274.6 420.2 273.3 413.0 C272.1 405.8 270.4 400.8 268.5 392.0 C266.6 383.2 263.6 370.3 262.0 360.0 C260.4 349.7 258.9 339.0 258.6 330.0 C258.4 321.0 260.2 310.0 260.5 306.0 Z" fill="#000" filter="url(#inner)" opacity="0.45"/>

<path d="M444.0 262.0 C445.2 264.7 449.0 272.7 451.0 278.0 C453.0 283.3 455.2 291.3 456.0 294.0" fill="none" stroke="#a8a8a8" stroke-width="3.0" opacity="0.6" stroke-linecap="round" stroke-linejoin="round" filter="url(#b15)"/>
<path d="M470.0 268.0 C471.2 271.3 475.7 281.3 477.0 288.0 C478.3 294.7 477.8 304.7 478.0 308.0" fill="none" stroke="#9a9a9a" stroke-width="3.0" opacity="0.45" stroke-linecap="round" stroke-linejoin="round" filter="url(#b15)"/>
<path d="M437.0 347.0 C435.8 348.8 432.7 353.8 430.0 358.0 C427.3 362.2 422.5 369.7 421.0 372.0" fill="none" stroke="#a8a8a8" stroke-width="3.0" opacity="0.6" stroke-linecap="round" stroke-linejoin="round" filter="url(#b15)"/>
<path d="M398.0 420.0 C401.7 424.0 411.7 437.2 420.0 444.0 C428.3 450.8 438.7 459.0 448.0 461.0 C457.3 463.0 471.3 456.8 476.0 456.0" fill="none" stroke="#b8b8b8" stroke-width="2.2" opacity="0.7" stroke-linecap="round" stroke-linejoin="round" filter="url(#b1)"/>
<path d="M286.0 446.0 C293.3 447.8 316.0 454.3 330.0 457.0 C344.0 459.7 355.0 459.3 370.0 462.0 C385.0 464.7 406.3 469.5 420.0 473.0 C433.7 476.5 446.7 481.3 452.0 483.0" fill="none" stroke="#a4a4a4" stroke-width="7" opacity="0.6" stroke-linecap="round" stroke-linejoin="round" filter="url(#b3)"/>
<path d="M242.0 490.0 C244.0 491.8 249.5 497.7 254.0 501.0 C258.5 504.3 264.0 505.3 269.0 509.6 C274.0 513.9 279.7 520.8 284.0 527.0 C288.3 533.2 293.1 540.3 295.0 546.8 C296.9 553.3 295.4 562.8 295.5 566.0" fill="none" stroke="#444" stroke-width="2.0" opacity="0.6" stroke-linecap="round" stroke-linejoin="round" filter="url(#b1)"/>
<path d="M279.0 351.0 C280.2 350.8 283.8 349.7 286.0 350.0 C288.2 350.3 290.3 351.5 292.0 353.0 C293.7 354.5 295.3 358.0 296.0 359.0" fill="none" stroke="#505050" stroke-width="1.4" opacity="0.8" stroke-linecap="round" stroke-linejoin="round" filter="url(#b06)"/>
<path d="M281.0 357.0 C280.8 359.2 279.7 365.3 279.5 370.0 C279.3 374.7 279.2 380.3 280.0 385.0 C280.8 389.7 283.3 395.8 284.0 398.0" fill="none" stroke="#606060" stroke-width="1.3" opacity="0.6" stroke-linecap="round" stroke-linejoin="round" filter="url(#b08)"/>
<path d="M293.4 360.0 C294.1 360.7 296.1 361.3 297.4 364.0 C298.7 366.7 301.5 372.3 301.3 376.0 C301.1 379.7 296.9 384.6 296.0 386.3" fill="none" stroke="#333" stroke-width="1.8" opacity="0.8" stroke-linecap="round" stroke-linejoin="round" filter="url(#b06)"/>
<path d="M306.5 386.0 C305.8 387.5 303.1 392.2 302.0 395.0 C300.9 397.8 300.3 401.7 300.0 403.0" fill="none" stroke="#505050" stroke-width="1.3" opacity="0.75" stroke-linecap="round" stroke-linejoin="round" filter="url(#b06)"/>
<path d="M266.0 345.2 C266.6 339.8 268.3 321.4 269.4 312.9 C270.6 304.4 271.6 300.1 273.1 294.1 C274.5 288.2 274.9 283.0 278.2 277.1 C281.5 271.2 287.3 263.9 292.7 258.7 C298.1 253.5 303.5 250.3 310.6 246.2 C317.8 242.1 327.2 237.6 335.6 234.2 C344.0 230.8 352.0 227.8 361.1 225.7 C370.2 223.7 385.3 222.6 390.2 221.9" fill="none" stroke="#9a9a9a" stroke-width="2.5" opacity="0.25" stroke-linecap="round" stroke-linejoin="round" filter="url(#b15)"/>
<path d="M272.4 313.2 C272.7 310.1 272.7 300.2 274.4 294.6 C276.1 289.1 278.4 285.0 282.5 280.0 C286.6 275.0 293.6 269.4 298.9 264.7 C304.3 260.0 308.3 256.5 314.5 251.8 C320.8 247.0 328.7 240.4 336.5 236.3 C344.3 232.3 357.2 228.9 361.4 227.4" fill="none" stroke="#e0e0e0" stroke-width="2.5" opacity="0.25" stroke-linecap="round" stroke-linejoin="round" filter="url(#b15)"/>
<path d="M281.6 297.2 C283.1 295.2 286.9 290.0 290.6 285.4 C294.2 280.7 299.3 274.3 303.6 269.1 C307.8 263.8 310.3 258.7 316.0 253.8 C321.7 248.9 330.1 242.8 337.9 239.8 C345.7 236.8 353.8 236.1 362.6 235.7 C371.4 235.2 386.0 237.1 390.7 237.3" fill="none" stroke="#a0a0a0" stroke-width="3" opacity="0.22" stroke-linecap="round" stroke-linejoin="round" filter="url(#b15)"/>
<path d="M281.7 345.8 C282.3 340.6 283.6 322.3 285.2 314.7 C286.8 307.2 289.4 305.1 291.1 300.7 C292.8 296.4 293.0 293.5 295.5 288.6 C297.9 283.7 301.9 276.3 305.9 271.3 C309.9 266.3 313.5 262.5 319.5 258.8 C325.4 255.1 334.4 251.6 341.8 249.3 C349.2 247.0 360.2 245.9 363.9 245.2" fill="none" stroke="#dedede" stroke-width="3" opacity="0.22" stroke-linecap="round" stroke-linejoin="round" filter="url(#b15)"/>
<path d="M295.3 315.9 C295.5 313.7 295.7 306.7 296.4 302.6 C297.0 298.5 296.6 295.4 299.3 291.2 C301.9 286.9 307.7 281.0 312.1 277.2 C316.6 273.4 320.7 271.6 326.2 268.4 C331.7 265.2 338.9 261.0 345.4 258.0 C351.8 255.0 357.1 251.9 364.7 250.2 C372.3 248.4 386.6 247.9 391.0 247.5" fill="none" stroke="#a8a8a8" stroke-width="3" opacity="0.18" stroke-linecap="round" stroke-linejoin="round" filter="url(#b15)"/>
<path d="M302.4 304.8 C303.4 303.6 305.3 300.4 308.4 297.2 C311.6 294.1 317.5 289.5 321.3 285.9 C325.1 282.3 327.0 279.5 331.3 275.7 C335.7 271.9 341.7 266.1 347.4 263.0 C353.1 259.9 362.6 258.2 365.7 257.2" fill="none" stroke="#e4e4e4" stroke-width="4" opacity="0.18" stroke-linecap="round" stroke-linejoin="round" filter="url(#b15)"/>
<path d="M257.0 360.7 C257.7 365.7 259.6 381.6 261.1 390.8 C262.6 400.0 264.4 407.6 266.1 416.0 C267.8 424.4 269.4 433.9 271.1 441.1 C272.8 448.4 275.3 456.3 276.2 459.3" fill="none" stroke="#a0a0a0" stroke-width="2" opacity="0.25" stroke-linecap="round" stroke-linejoin="round" filter="url(#b1)"/>
<path d="M253.1 361.2 C253.8 366.2 255.6 382.2 257.1 391.5 C258.6 400.7 260.5 408.3 262.2 416.8 C263.9 425.2 265.5 434.8 267.2 442.0 C268.9 449.3 271.5 457.3 272.3 460.4" fill="none" stroke="#d8d8d8" stroke-width="2" opacity="0.25" stroke-linecap="round" stroke-linejoin="round" filter="url(#b1)"/>
<path d="M308.0 300.0 C307.0 306.7 303.7 326.7 302.0 340.0 C300.3 353.3 297.7 366.7 298.0 380.0 C298.3 393.3 301.7 408.3 304.0 420.0 C306.3 431.7 310.7 445.0 312.0 450.0" fill="none" stroke="#c8c8c8" stroke-width="2.5" opacity="0.35" stroke-linecap="round" stroke-linejoin="round" filter="url(#b15)"/>
<path d="M320.0 300.0 C319.0 306.7 315.7 326.7 314.0 340.0 C312.3 353.3 309.7 366.7 310.0 380.0 C310.3 393.3 313.7 408.3 316.0 420.0 C318.3 431.7 322.7 445.0 324.0 450.0" fill="none" stroke="#e8e8e8" stroke-width="2.5" opacity="0.3" stroke-linecap="round" stroke-linejoin="round" filter="url(#b15)"/>
<path d="M334.0 300.0 C333.0 306.7 329.7 326.7 328.0 340.0 C326.3 353.3 323.7 366.7 324.0 380.0 C324.3 393.3 327.7 408.3 330.0 420.0 C332.3 431.7 336.7 445.0 338.0 450.0" fill="none" stroke="#c4c4c4" stroke-width="2.5" opacity="0.3" stroke-linecap="round" stroke-linejoin="round" filter="url(#b15)"/>
<path d="M348.0 300.0 C347.0 306.7 343.7 326.7 342.0 340.0 C340.3 353.3 337.7 366.7 338.0 380.0 C338.3 393.3 341.7 408.3 344.0 420.0 C346.3 431.7 350.7 445.0 352.0 450.0" fill="none" stroke="#ececec" stroke-width="2.5" opacity="0.3" stroke-linecap="round" stroke-linejoin="round" filter="url(#b15)"/>
<path d="M360.0 300.0 C359.0 306.7 355.7 326.7 354.0 340.0 C352.3 353.3 349.7 366.7 350.0 380.0 C350.3 393.3 353.7 408.3 356.0 420.0 C358.3 431.7 362.7 445.0 364.0 450.0" fill="none" stroke="#c8c8c8" stroke-width="2.5" opacity="0.25" stroke-linecap="round" stroke-linejoin="round" filter="url(#b15)"/>
<path d="M264.0 296.0 C264.5 294.7 265.6 291.4 267.0 288.0 C268.4 284.6 268.0 281.5 272.4 275.6 C276.8 269.7 290.1 256.3 293.6 252.4" fill="none" stroke="#f0f0f0" stroke-width="3.0" opacity="0.9" stroke-linecap="round" stroke-linejoin="round"/>
<path d="M272.4 275.6 C275.9 271.7 286.9 259.2 293.6 252.4 C300.3 245.6 306.4 239.5 312.8 235.0 C319.2 230.5 324.9 228.3 332.0 225.4 C339.1 222.5 348.1 219.2 355.3 217.7 C362.5 216.2 368.4 216.7 375.0 216.5 C381.6 216.3 389.5 216.1 395.0 216.5 C400.5 216.9 405.8 218.3 408.0 218.7" fill="none" stroke="#f4f4f4" stroke-width="6.0" opacity="0.95" stroke-linecap="round" stroke-linejoin="round"/>
<path d="M390.0 215.5 C392.4 216.0 399.4 216.7 404.2 218.5 C408.9 220.3 413.8 223.7 418.5 226.4 C423.2 229.2 427.2 231.0 432.7 235.0 C438.2 239.0 448.2 248.0 451.3 250.6" fill="none" stroke="#f0f0f0" stroke-width="4.0" opacity="0.9" stroke-linecap="round" stroke-linejoin="round"/>
<path d="M399.5 217.0 C397.8 217.8 392.3 218.2 389.5 222.0 C386.7 225.8 384.2 233.3 382.5 240.0 C380.8 246.7 380.5 254.2 379.5 262.0 C378.5 269.8 377.7 279.0 376.5 287.0 C375.3 295.0 373.6 304.5 372.5 310.0 C371.4 315.5 369.9 314.1 369.8 320.0 C369.7 325.9 370.1 336.7 371.9 345.6 C373.7 354.5 378.4 364.1 380.5 373.4 C382.6 382.7 384.5 392.6 384.7 401.2 C384.9 409.8 382.9 418.6 381.5 425.0 C380.1 431.4 377.8 434.0 376.2 439.7 C374.6 445.4 373.0 450.2 372.0 459.2 C371.0 468.2 371.4 483.9 370.3 493.6 C369.2 503.4 365.7 510.2 365.1 517.7 C364.5 525.2 366.0 533.2 366.9 538.4 C367.8 543.6 369.7 547.0 370.3 548.7" fill="none" stroke="#fafafa" stroke-width="1.0" opacity="0.6" stroke-linecap="round" stroke-linejoin="round"/>
<path d="M398.0 217.0 C396.3 217.8 390.8 218.2 388.0 222.0 C385.2 225.8 382.7 233.3 381.0 240.0 C379.3 246.7 379.0 254.2 378.0 262.0 C377.0 269.8 376.2 279.0 375.0 287.0 C373.8 295.0 372.1 304.5 371.0 310.0 C369.9 315.5 368.4 314.1 368.3 320.0 C368.2 325.9 368.6 336.7 370.4 345.6 C372.2 354.5 376.9 364.1 379.0 373.4 C381.1 382.7 383.0 392.6 383.2 401.2 C383.4 409.8 381.4 418.6 380.0 425.0 C378.6 431.4 376.3 434.0 374.7 439.7 C373.1 445.4 371.5 450.2 370.5 459.2 C369.5 468.2 369.9 483.9 368.8 493.6 C367.7 503.4 364.2 510.2 363.6 517.7 C363.0 525.2 364.5 533.2 365.4 538.4 C366.3 543.6 368.2 547.0 368.8 548.7" fill="none" stroke="#2e2e2e" stroke-width="1.4" opacity="0.85" stroke-linecap="round" stroke-linejoin="round"/>
<path d="M383.0 388.0 C383.6 390.3 386.8 395.3 386.5 402.0 C386.2 408.7 382.8 420.7 381.0 428.0 C379.2 435.3 376.8 443.0 376.0 446.0" fill="none" stroke="#3a3a3a" stroke-width="1.0" opacity="0.7" stroke-linecap="round" stroke-linejoin="round"/>
<path d="M371.0 310.0 C375.0 309.4 386.5 307.1 395.0 306.5 C403.5 305.9 417.5 306.6 422.0 306.6" fill="none" stroke="#8c8c8c" stroke-width="1.0" opacity="0.75" stroke-linecap="round" stroke-linejoin="round"/>
<path d="M372.0 313.5 C375.8 312.9 387.0 310.6 395.0 310.0 C403.0 309.4 415.8 310.0 420.0 310.0" fill="none" stroke="#fafafa" stroke-width="1.2" opacity="0.6" stroke-linecap="round" stroke-linejoin="round"/>
<path d="M455.0 293.0 C455.8 294.2 458.0 297.8 460.0 300.0 C462.0 302.2 464.3 303.3 467.0 306.0 C469.7 308.7 474.5 314.3 476.0 316.0" fill="none" stroke="#3a3a3a" stroke-width="1.1" opacity="0.8" stroke-linecap="round" stroke-linejoin="round"/>
<path d="M458.0 300.0 C459.2 301.2 462.7 304.8 465.0 307.0 C467.3 309.2 470.8 312.0 472.0 313.0" fill="none" stroke="#9a9a9a" stroke-width="2.0" opacity="0.5" stroke-linecap="round" stroke-linejoin="round" filter="url(#b1)"/>
<path d="M441.0 340.0 C441.3 341.5 442.0 346.5 443.0 349.0 C444.0 351.5 445.2 353.7 447.0 355.0 C448.8 356.3 451.4 357.4 454.0 357.0 C456.6 356.6 460.4 354.8 462.7 352.5 C464.9 350.2 466.7 344.6 467.5 343.0" fill="none" stroke="#2e2e2e" stroke-width="1.3" opacity="0.8" stroke-linecap="round" stroke-linejoin="round"/>
<path d="M469.0 348.0 C469.5 349.7 471.2 354.0 472.0 358.0 C472.8 362.0 473.7 369.7 474.0 372.0" fill="none" stroke="#9a9a9a" stroke-width="2.2" opacity="0.55" stroke-linecap="round" stroke-linejoin="round" filter="url(#b1)"/>
<path d="M440.0 388.0 C442.7 388.2 450.0 388.9 456.0 389.5 C462.0 390.1 472.7 391.2 476.0 391.5" fill="none" stroke="#8a8a8a" stroke-width="1.1" opacity="0.7" stroke-linecap="round" stroke-linejoin="round" filter="url(#b06)"/>
<path d="M486.0 347.0 C486.5 349.8 488.2 358.3 489.0 364.0 C489.8 369.7 490.4 375.3 490.5 381.0 C490.6 386.7 490.3 392.3 489.8 398.0 C489.3 403.7 487.9 412.2 487.5 415.0" fill="none" stroke="#f0f0f0" stroke-width="1.6" opacity="0.85" stroke-linecap="round" stroke-linejoin="round"/>
<path d="M484.0 350.0 C484.4 352.3 485.9 358.8 486.5 364.0 C487.1 369.2 487.4 375.3 487.5 381.0 C487.6 386.7 487.4 392.3 487.0 398.0 C486.6 403.7 485.3 412.2 485.0 415.0" fill="none" stroke="#303030" stroke-width="0.9" opacity="0.65" stroke-linecap="round" stroke-linejoin="round"/>
<path d="M484.0 452.0 C483.0 454.0 480.3 460.2 478.0 464.0 C475.7 467.8 472.7 471.5 470.0 475.0 C467.3 478.5 463.3 483.3 462.0 485.0" fill="none" stroke="#fafafa" stroke-width="2.0" opacity="0.8" stroke-linecap="round" stroke-linejoin="round"/>
<path d="M380.0 467.0 C385.7 469.0 402.0 475.3 414.0 479.0 C426.0 482.7 443.8 488.2 451.8 489.4 C459.8 490.6 458.0 489.6 462.0 486.0 C466.0 482.4 473.7 471.0 476.0 468.0" fill="none" stroke="#4a4a4a" stroke-width="1.1" opacity="0.8" stroke-linecap="round" stroke-linejoin="round"/>
<path d="M290.0 452.0 C296.7 453.7 316.8 459.5 330.0 462.0 C343.2 464.5 360.0 465.7 369.0 467.0 C378.0 468.3 375.5 467.8 384.0 469.6 C392.5 471.4 408.4 475.3 420.0 478.0 C431.6 480.7 448.0 484.4 453.6 485.7" fill="none" stroke="#6a6a6a" stroke-width="1.0" opacity="0.75" stroke-linecap="round" stroke-linejoin="round"/>
<path d="M295.0 467.0 C301.7 468.5 322.7 473.5 335.0 476.0 C347.3 478.5 356.5 479.3 369.0 482.0 C381.5 484.7 396.7 488.7 410.0 492.0 C423.3 495.3 442.2 500.2 448.6 501.8" fill="none" stroke="#9a9a9a" stroke-width="1.2" opacity="0.55" stroke-linecap="round" stroke-linejoin="round"/>
<path d="M296.0 339.0 C293.7 339.5 285.7 340.2 282.0 342.0 C278.3 343.8 275.8 346.3 274.0 350.0 C272.2 353.7 271.4 359.3 271.0 364.0 C270.6 368.7 271.3 373.7 271.8 378.0 C272.3 382.3 272.6 385.8 274.0 390.0 C275.4 394.2 277.3 399.6 280.3 403.4 C283.3 407.1 287.9 410.5 292.0 412.5 C296.1 414.5 301.5 416.0 305.2 415.4 C308.9 414.8 312.9 409.7 314.4 408.6" fill="none" stroke="#262626" stroke-width="1.3" opacity="0.85" stroke-linecap="round" stroke-linejoin="round"/>
<path d="M456.0 487.0 C455.2 489.2 452.3 495.3 451.5 500.0 C450.7 504.7 450.8 510.0 451.0 515.0 C451.2 520.0 452.0 525.0 453.0 530.0 C454.0 535.0 456.3 542.5 457.0 545.0" fill="none" stroke="#f6f6f6" stroke-width="4.0" opacity="1" stroke-linecap="round" stroke-linejoin="round"/>
<path d="M457.0 497.0 C456.9 500.0 456.2 509.5 456.5 515.0 C456.8 520.5 457.8 525.0 458.5 530.0 C459.2 535.0 460.6 542.5 461.0 545.0" fill="none" stroke="#2a2a2a" stroke-width="1.0" opacity="0.85" stroke-linecap="round" stroke-linejoin="round"/>
<path d="M464.5 506.0 C464.6 509.2 464.8 518.5 465.0 525.0 C465.2 531.5 465.8 541.7 466.0 545.0" fill="none" stroke="#2a2a2a" stroke-width="1.0" opacity="0.6" stroke-linecap="round" stroke-linejoin="round"/>
</g>
<path d="M353.6 550.5 L374 548.5 L375 554 L372 557 L376 560 L378 566 L381 568 L379 572.5 L375 571 L369 564 L361 556z" fill="#ececec"/>
<g fill="#dedede"><rect x="377" y="548" width="4" height="4"/><rect x="383" y="548" width="6" height="3"/><rect x="385" y="552" width="3" height="3"/><rect x="379" y="556" width="3" height="3"/><rect x="382" y="561" width="2" height="2"/><rect x="395" y="556" width="2" height="2"/><rect x="401" y="560" width="2" height="1"/><rect x="408" y="555" width="1" height="2"/><rect x="417" y="554" width="2" height="1"/><rect x="389" y="563" width="2" height="2"/></g>
<path d="M395 547.2 L414.5 546.5 L413 552.5 L397 553.5z" fill="#c4c4c4"/>
</svg><!--/HEAD-->
</div>

<!-- tabs -->
<svg class="a" style="left:0;top:660px" width="420" height="25">
 <path d="M256.8 6.5 L260.2 18.5 Q261.40000000000003 21.5 264.3 21.5 L347.5 21.5 Q350.4 21.5 351.6 18.5 L355 6.5 Z" fill="#fff"/>
 <path d="M-0.5 6.5 L2.9 17.5 Q4.1 20.5 7.0 20.5 L49.8 20.5 Q52.699999999999996 20.5 53.9 17.5 L57.3 6.5 M59.3 6.5 L62.699999999999996 17.5 Q63.9 20.5 66.8 20.5 L149.3 20.5 Q152.20000000000002 20.5 153.4 17.5 L156.8 6.5 M158.7 6.5 L162.1 17.5 Q163.29999999999998 20.5 166.2 20.5 L247.8 20.5 Q250.70000000000002 20.5 251.9 17.5 L255.3 6.5" fill="none" stroke="#1e1e1e" stroke-width="1"/>
 <path d="M256.8 6.5 L260.2 18.5 Q261.40000000000003 21.5 264.3 21.5 L347.5 21.5 Q350.4 21.5 351.6 18.5 L355 6.5" fill="none" stroke="#1e1e1e" stroke-width="1"/>
</svg>
<div class="a tab" style="left:11px">Sheet 1</div>
<div class="a tab" style="left:71px">PE#0 head.vt 0</div>
<div class="a tab" style="left:170px">PE#1 head.vt 0</div>
<div class="a tab" style="left:269px;top:668px">PE#2 head.vt 0</div>
<!-- close -->
<div class="a" style="left:706px;top:670px;width:13px;height:12px;background:radial-gradient(circle at 30% 30%,#f06848,#c81e10)"></div>
<svg class="a" style="left:706px;top:670px" width="13" height="12"><path d="M3.5 3L9.5 9M9.5 3L3.5 9" stroke="#fff" stroke-width="2.2"/></svg>
<!-- size grip -->
<svg class="a" style="left:711px;top:688px" width="13" height="14">
 <g fill="#fff"><rect x="10" y="2" width="2" height="2"/><rect x="6" y="6" width="2" height="2"/><rect x="10" y="6" width="2" height="2"/><rect x="2" y="10" width="2" height="2"/><rect x="6" y="10" width="2" height="2"/><rect x="10" y="10" width="2" height="2"/></g>
 <g fill="#a9a595"><rect x="9" y="1" width="2" height="2"/><rect x="5" y="5" width="2" height="2"/><rect x="9" y="5" width="2" height="2"/><rect x="1" y="9" width="2" height="2"/><rect x="5" y="9" width="2" height="2"/><rect x="9" y="9" width="2" height="2"/></g>
</svg>

<div class="a" style="left:723px;top:27px;width:3px;height:675px;background:#0041dc;border-left:1px solid #fbf3dc"></div>
<div class="a" style="left:0;top:700px;width:723px;height:1px;background:#fcf3d9"></div>
<div class="a" style="left:0;top:701px;width:726px;height:1px;background:#0a46e0"></div>
</body></html>
